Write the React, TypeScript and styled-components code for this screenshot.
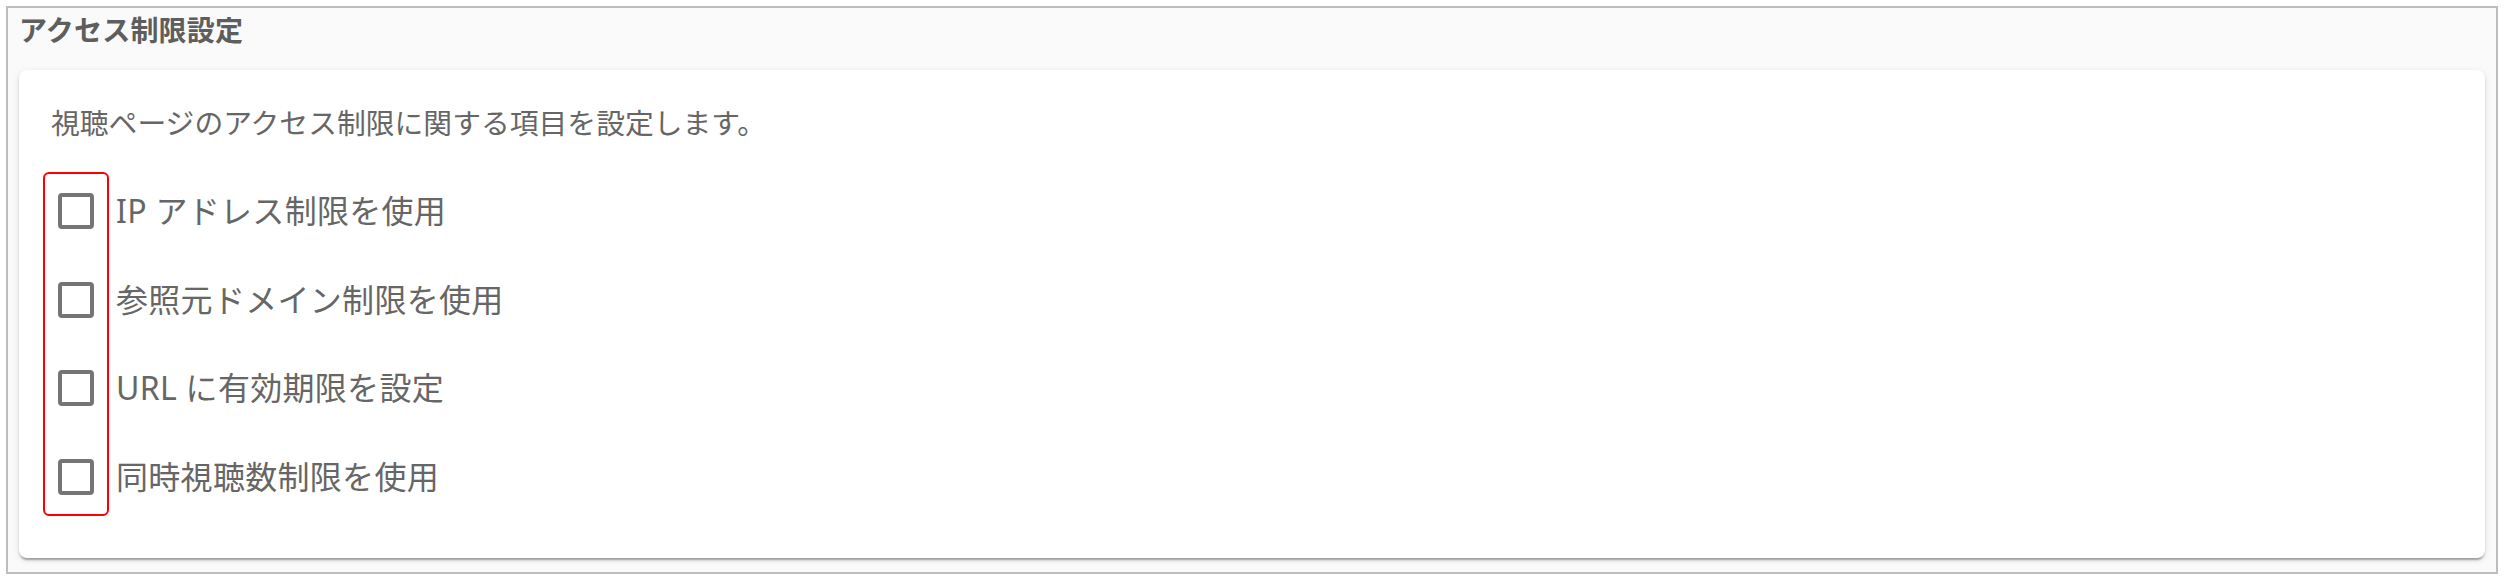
import React from "react";
import styled, { createGlobalStyle } from "styled-components";

const GlobalStyle = createGlobalStyle`
  html, body {
    margin: 0;
    padding: 0;
    background: #ffffff;
  }
  body {
    font-family: "Noto Sans", "Noto Sans CJK JP", sans-serif;
  }
  #root {
    padding: 6px 7px 0 6px;
  }
`;

const Section = styled.section`
  box-sizing: border-box;
  width: 2492px;
  height: 568px;
  border: 2px solid #bdbdbd;
  background: #fafafa;
  padding: 2px 11px 14px 11px;
  display: flex;
  flex-direction: column;
`;

const Title = styled.h2`
  margin: 0 0 20px 0;
  font-size: 28px;
  line-height: 40px;
  font-weight: 700;
  color: #5e5e5e;
  letter-spacing: 0.2px;
`;

const Card = styled.div`
  box-sizing: border-box;
  flex: 1;
  background: #ffffff;
  border-radius: 8px;
  box-shadow: 0 4px 2px -2px rgba(0, 0, 0, 0.2), 0 2px 2px 0 rgba(0, 0, 0, 0.14),
    0 2px 6px 0 rgba(0, 0, 0, 0.12);
  padding: 32px 32px 42px 32px;
  display: flex;
  flex-direction: column;
`;

const Description = styled.p`
  margin: 0 0 28px 0;
  font-size: 28.8px;
  line-height: 42px;
  color: #666666;
`;

const List = styled.div`
  position: relative;
  display: flex;
  flex-direction: column;
  gap: 10.67px;
`;

const Highlight = styled.div`
  position: absolute;
  left: -8px;
  top: 0;
  bottom: 0;
  width: 66px;
  box-sizing: border-box;
  border: 2px solid #ff0000;
  border-radius: 6px;
  pointer-events: none;
`;

const Row = styled.label`
  display: flex;
  align-items: center;
  height: 78px;
  padding-left: 7px;
  gap: 22px;
  cursor: pointer;
`;

const Box = styled.span<{ $checked?: boolean }>`
  box-sizing: border-box;
  width: 36px;
  height: 36px;
  border: 4px solid #757575;
  border-radius: 4px;
  background: ${(p) => (p.$checked ? "#757575" : "#ffffff")};
  flex: none;
`;

const LabelText = styled.span`
  font-size: 32px;
  line-height: 48px;
  letter-spacing: 0.3px;
  color: #666666;
`;

const options = [
  "IP アドレス制限を使用",
  "参照元ドメイン制限を使用",
  "URL に有効期限を設定",
  "同時視聴数制限を使用",
];

export default function App() {
  return (
    <>
      <GlobalStyle />
      <Section>
        <Title>アクセス制限設定</Title>
        <Card>
          <Description>視聴ページのアクセス制限に関する項目を設定します。</Description>
          <List>
            {options.map((o) => (
              <Row key={o}>
                <Box />
                <LabelText>{o}</LabelText>
              </Row>
            ))}
            <Highlight />
          </List>
        </Card>
      </Section>
    </>
  );
}
